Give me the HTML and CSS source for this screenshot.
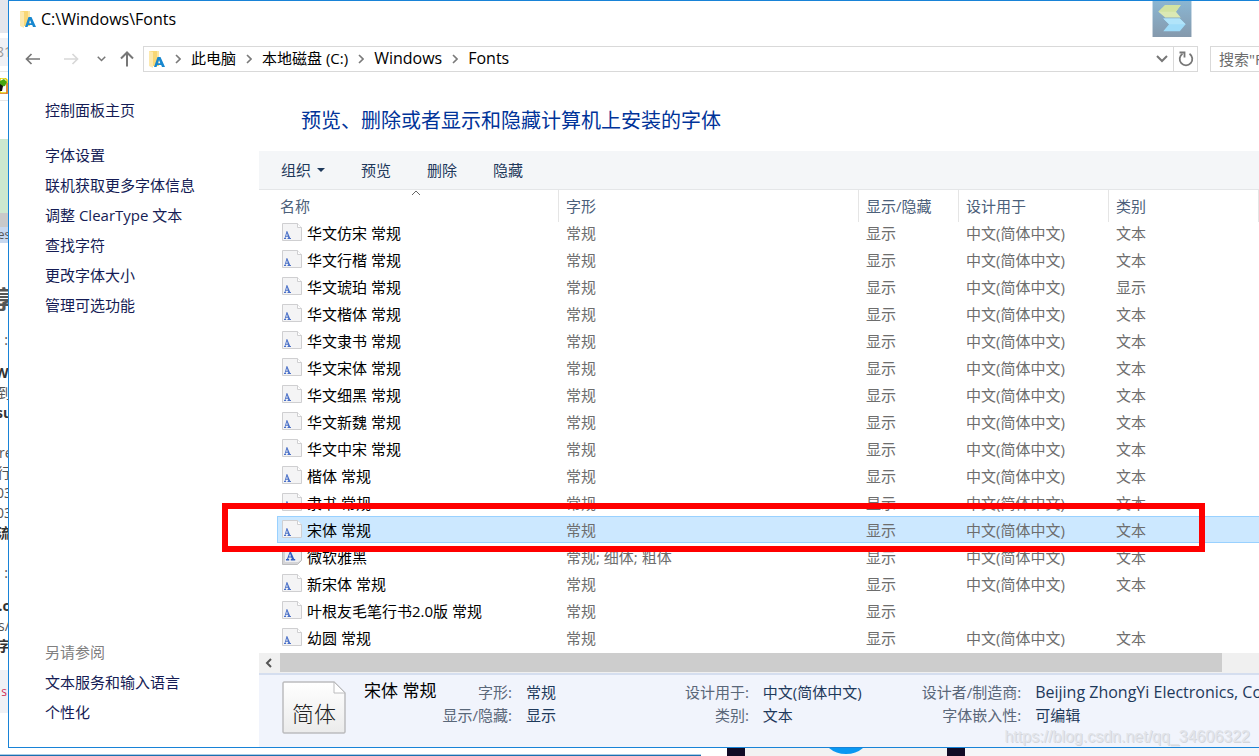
FILE: index.html
```html
<!DOCTYPE html>
<html lang="zh-CN">
<head>
<meta charset="utf-8">
<title>C:\Windows\Fonts</title>
<link rel="stylesheet" href="styles.css">
</head>
<body>
<svg class="defs" aria-hidden="true">
  <symbol id="folder" viewBox="0 0 16 18">
    <path d="M0 1h8l2 2v13H3z" fill="#f8d775"/>
    <path d="M8 1h2v13H8z" fill="#fbe6a5"/>
    <path d="M0 1l4 1v16l-4-2z" fill="#fde9ae"/>
    <path d="M8.500 7h3L16 17h-3l-.8-2H8.300l-.8 2H5zM10 10l-1 3.300h2.300z" fill="#1787cf" fill-rule="evenodd"/>
  </symbol>
  <symbol id="chev" viewBox="0 0 6 10"><path d="M1 1l4 4-4 4" fill="none" stroke="#7a7a7a" stroke-width="1.600"/></symbol>
  <symbol id="down" viewBox="0 0 12 8"><path d="M1 1l5 5 5-5" fill="none" stroke="#777" stroke-width="2"/></symbol>
  <symbol id="font" viewBox="0 0 20 18">
    <path d="M.5.5h15l4 4v13H.5z" fill="#f4f4f5" stroke="#cfcfd1"/>
    <path d="M15.500.5v4h4" fill="#fff" stroke="#cfcfd1"/>
    <path d="M5.200 8l3 7H9v1H5.500v-1h.8l-.4-1.200H3.800L3.400 15h.7v1H2v-1h.6L4.600 8zM5 10.200L4.100 12.800h1.600z" fill="#4a70c8" fill-rule="evenodd"/>
  </symbol>
  <symbol id="family" viewBox="0 0 20 18">
    <path d="M.5.500h19v13l-4 4H.5z" fill="#d4d4d7" stroke="#bdbdbf"/>
    <path d="M3 1h16v12l-3 2H3z" fill="#f0f0f1"/>
    <path d="M8.600 4l3.600 8h1v1.500H8.800V12h1l-.5-1.400H6.600L6.200 12h1v1.500H4V12h1l3-8zM8 6.500L7 9.500h2z" fill="#2f5cc0" fill-rule="evenodd"/>
  </symbol>
</svg>
<div class="screen">
  <aside class="behind" aria-hidden="true">
    <div class="b-tab"></div>
    <div class="b-url">81</div>
    <div class="b-mark"><svg viewBox="0 0 8 16"><path d="M0 0h5l2 2v13H0z" fill="#fff" stroke="#e0d200" stroke-width="1.500"/><path d="M7 5v11H0" fill="none" stroke="#e34b3b"/><path d="M0 3l4-2 3 3-2 4-5 1z" fill="#45a512"/><path d="M0 6l3 2-1 5H0z" fill="#111"/></svg></div>
    <div class="b-green"></div>
    <div class="b-grey"></div>
    <div class="b-blue">es</div>
    <div class="b-big">享</div>
    <div class="b-line b-end">:</div>
    <div class="b-group">
      <div class="b-line b-bold">Wi</div>
      <div class="b-line">到</div>
      <div class="b-line b-bold">su</div>
    </div>
    <div class="b-group">
      <div class="b-line">jre</div>
      <div class="b-line">行</div>
      <div class="b-line">03</div>
      <div class="b-line">03</div>
      <div class="b-line b-bold">流</div>
    </div>
    <div class="b-line b-end">:</div>
    <div class="b-group b-last">
      <div class="b-line b-bold">.c</div>
      <div class="b-line">s/</div>
      <div class="b-line b-bold">字</div>
    </div>
    <div class="b-code">s</div>
  </aside>

  <main class="window">
    <header class="titlebar">
      <svg class="i-folder"><use href="#folder"/></svg>
      <span>C:\Windows\Fonts</span>
    </header>
    <svg class="app-logo" viewBox="0 0 40 37">
      <defs><linearGradient id="lg" x2="0" y2="1"><stop stop-color="#8ab6d3"/><stop offset="1" stop-color="#8599ac"/></linearGradient></defs>
      <path d="M0 0h40v37H0z" fill="url(#lg)"/>
      <path d="M13 4h16l-5 7 5 6H13l-7-6z" fill="#dbe9b4"/>
      <path d="M13 4h16l-5 7H6z" fill="#d2e3a2"/>
      <path d="M11 18h17l6 6-6 7H11l6-7z" fill="#9fdcf9"/>
      <path d="M11 18h17l6 6H17z" fill="#b1e4fa"/>
    </svg>

    <nav class="navbar">
      <button class="nav-btn" aria-label="后退"><svg width="16" height="12" viewBox="0 0 16 12"><path d="M15 6H1.500M6.500 1l-5 5 5 5" fill="none" stroke="#777" stroke-width="1.700"/></svg></button>
      <button class="nav-btn nav-fwd" aria-label="前进"><svg width="16" height="12" viewBox="0 0 16 12"><path d="M1 6h13.500M9.500 1l5 5-5 5" fill="none" stroke="#d8d8d8" stroke-width="1.700"/></svg></button>
      <button class="nav-btn nav-recent" aria-label="最近"><svg width="9" height="6" viewBox="0 0 12 8"><use href="#down"/></svg></button>
      <button class="nav-btn nav-up" aria-label="向上"><svg width="14" height="16" viewBox="0 0 14 16"><path d="M7 15.500V1.500M1 7.500l6-6 6 6" fill="none" stroke="#777" stroke-width="2"/></svg></button>
      <div class="address">
        <svg class="i-folder"><use href="#folder"/></svg>
        <svg class="i-chev"><use href="#chev"/></svg><a href="#">此电脑</a>
        <svg class="i-chev"><use href="#chev"/></svg><a href="#">本地磁盘 (C:)</a>
        <svg class="i-chev"><use href="#chev"/></svg><a class="latin" href="#">Windows</a>
        <svg class="i-chev"><use href="#chev"/></svg><a class="latin" href="#">Fonts</a>
        <button class="drop" aria-label="展开"><svg width="12" height="8"><use href="#down"/></svg></button>
        <button class="refresh" aria-label="刷新"><svg width="16" height="16" viewBox="0 0 16 16"><path d="M11.500 2.800A6.300 6.300 0 1 1 4.500 2.800" fill="none" stroke="#777" stroke-width="1.800"/><path d="M1.500 1.500h5v5" fill="none" stroke="#777" stroke-width="1.800"/></svg></button>
      </div>
      <input class="search" type="text" aria-label="搜索" placeholder='搜索"Fonts"'>
    </nav>

    <div class="body">
      <aside class="sidebar">
        <a class="home" href="#">控制面板主页</a>
        <a href="#">字体设置</a>
        <a href="#">联机获取更多字体信息</a>
        <a href="#">调整 ClearType 文本</a>
        <a href="#">查找字符</a>
        <a href="#">更改字体大小</a>
        <a href="#">管理可选功能</a>
        <span class="see-also">另请参阅</span>
        <a href="#">文本服务和输入语言</a>
        <a href="#">个性化</a>
      </aside>

      <section class="content">
        <h1>预览、删除或者显示和隐藏计算机上安装的字体</h1>
        <div class="toolbar">
          <button>组织<svg width="8" height="4" viewBox="0 0 8 4"><path d="M0 0h8L4 4z" fill="#1e395b"/></svg></button>
          <button>预览</button>
          <button>删除</button>
          <button>隐藏</button>
        </div>
        <div class="list">
          <table>
            <colgroup><col class="c-name"><col class="c-style"><col class="c-show"><col class="c-for"><col class="c-kind"><col></colgroup>
            <thead><tr><th>名称<svg class="sort" viewBox="0 0 10 6"><path d="M1 5l4-4 4 4" fill="none" stroke="#666"/></svg></th><th>字形</th><th>显示/隐藏</th><th>设计用于</th><th>类别</th><th></th></tr></thead>
            <tbody>
              <tr><td><svg class="i-font"><use href="#font"/></svg>华文仿宋 常规</td><td>常规</td><td>显示</td><td>中文(简体中文)</td><td>文本</td><td></td></tr>
              <tr><td><svg class="i-font"><use href="#font"/></svg>华文行楷 常规</td><td>常规</td><td>显示</td><td>中文(简体中文)</td><td>文本</td><td></td></tr>
              <tr><td><svg class="i-font"><use href="#font"/></svg>华文琥珀 常规</td><td>常规</td><td>显示</td><td>中文(简体中文)</td><td>显示</td><td></td></tr>
              <tr><td><svg class="i-font"><use href="#font"/></svg>华文楷体 常规</td><td>常规</td><td>显示</td><td>中文(简体中文)</td><td>文本</td><td></td></tr>
              <tr><td><svg class="i-font"><use href="#font"/></svg>华文隶书 常规</td><td>常规</td><td>显示</td><td>中文(简体中文)</td><td>文本</td><td></td></tr>
              <tr><td><svg class="i-font"><use href="#font"/></svg>华文宋体 常规</td><td>常规</td><td>显示</td><td>中文(简体中文)</td><td>文本</td><td></td></tr>
              <tr><td><svg class="i-font"><use href="#font"/></svg>华文细黑 常规</td><td>常规</td><td>显示</td><td>中文(简体中文)</td><td>文本</td><td></td></tr>
              <tr><td><svg class="i-font"><use href="#font"/></svg>华文新魏 常规</td><td>常规</td><td>显示</td><td>中文(简体中文)</td><td>文本</td><td></td></tr>
              <tr><td><svg class="i-font"><use href="#font"/></svg>华文中宋 常规</td><td>常规</td><td>显示</td><td>中文(简体中文)</td><td>文本</td><td></td></tr>
              <tr><td><svg class="i-font"><use href="#font"/></svg>楷体 常规</td><td>常规</td><td>显示</td><td>中文(简体中文)</td><td>文本</td><td></td></tr>
              <tr><td><svg class="i-font"><use href="#font"/></svg>隶书 常规</td><td>常规</td><td>显示</td><td>中文(简体中文)</td><td>文本</td><td></td></tr>
              <tr class="selected"><td><svg class="i-font"><use href="#font"/></svg>宋体 常规<span class="marker"></span></td><td>常规</td><td>显示</td><td>中文(简体中文)</td><td>文本</td><td></td></tr>
              <tr><td><svg class="i-font"><use href="#family"/></svg>微软雅黑</td><td>常规; 细体; 粗体</td><td>显示</td><td>中文(简体中文)</td><td>文本</td><td></td></tr>
              <tr><td><svg class="i-font"><use href="#font"/></svg>新宋体 常规</td><td>常规</td><td>显示</td><td>中文(简体中文)</td><td>文本</td><td></td></tr>
              <tr><td><svg class="i-font"><use href="#font"/></svg>叶根友毛笔行书2.0版 常规</td><td>常规</td><td>显示</td><td></td><td></td><td></td></tr>
              <tr><td><svg class="i-font"><use href="#font"/></svg>幼圆 常规</td><td>常规</td><td>显示</td><td>中文(简体中文)</td><td>文本</td><td></td></tr>
            </tbody>
          </table>
        </div>
        <div class="scrollbar">
          <button aria-label="向左滚动"><svg width="7" height="10" viewBox="0 0 7 10"><path d="M6 1L2 5l4 4" fill="none" stroke="#555" stroke-width="2"/></svg></button>
          <div class="thumb"></div>
        </div>
        <footer class="details">
          <div class="preview">
            <svg viewBox="0 0 64 53"><defs><linearGradient id="pg" x2="0" y2="1"><stop stop-color="#fff"/><stop offset="1" stop-color="#ebebeb"/></linearGradient></defs><path d="M2 1h50l11 11v39l-1 1H2l-1-1V2z" fill="url(#pg)" stroke="#bcbcbe" stroke-width="1.500"/><path d="M52 1v11h11z" fill="#fff" stroke="#bcbcbe"/></svg>
            <span>简体</span>
          </div>
          <h2>宋体 常规</h2>
          <dl class="d1"><dt>字形:</dt><dd>常规</dd><dt>显示/隐藏:</dt><dd>显示</dd></dl>
          <dl class="d2"><dt>设计用于:</dt><dd>中文(简体中文)</dd><dt>类别:</dt><dd>文本</dd></dl>
          <dl class="d3"><dt>设计者/制造商:</dt><dd class="latin">Beijing ZhongYi Electronics, Co</dd><dt>字体嵌入性:</dt><dd>可编辑</dd></dl>
        </footer>
      </section>
    </div>
    <div class="watermark">https://blog.csdn.net/qq_34606322</div>
  </main>

  <div class="under" aria-hidden="true">
    <div class="u-bar"></div><div class="u-gap"></div><div class="u-dark"></div>
    <div class="u-mid"><svg width="40" height="7" viewBox="0 0 40 7"><path d="M3 0h34q-7 6-17 6T3 0z" fill="#0a98f2"/></svg></div>
    <div class="u-dark"></div><div class="u-rest"></div>
  </div>
</div>
</body>
</html>
```

FILE: styles.css
```css
* { box-sizing: border-box; }
body {
  margin: 0;
  background: #fff;
  font: 15px/20px "Open Sans", "Noto Sans CJK SC", sans-serif;
  color: #000;
}
a { color: inherit; text-decoration: none; }
button { font: inherit; color: inherit; border: 0; padding: 0; background: none; }
svg { display: block; flex: none; }
.defs { position: absolute; width: 0; height: 0; }
.latin { font-size: 16px; }

.screen {
  display: grid;
  grid-template: minmax(0, 1fr) 8px / 8px minmax(0, 1fr);
  height: 100vh;
  overflow: hidden;
}

/* page that shows at the left of the window */
.behind { overflow: hidden; min-height: 0; font-size: 14px; color: #555; }
.behind > div, .b-line { display: flex; justify-content: center; white-space: nowrap; }
.b-tab { height: 33px; background: #e4e6ec; }
.b-url { height: 28px; margin: 5px 0; background: #f0f1f5; align-items: center; color: #999; }
.b-mark { height: 30px; align-items: center; border: solid #e6e6e6; border-width: 1px 0; }
.b-mark svg { width: 8px; height: 16px; }
.b-green { height: 74px; margin-top: 38px; background: #cce8cf; }
.b-grey { height: 14px; background: #c9c9c9; }
.b-blue { height: 16px; background: #c7d8ef; font-size: 12px; line-height: 16px; }
.b-big { margin-top: 43px; height: 26px; font-size: 24px; line-height: 26px; font-weight: 700; }
.behind > .b-end { margin-top: 18px; justify-content: flex-end; }
.behind > .b-group { display: block; margin: 13px 0 20px; }
.behind > .b-group + .b-group { margin-top: 0; }
.behind > .b-last { margin-bottom: 14px; }
.b-line { height: 20px; }
.b-bold { font-weight: 700; color: #333; }
.b-code { height: 43px; align-items: center; background: #f0f1f5; color: #d0305a; font-size: 12px; }

/* strip under the window */
.under { grid-column: 1 / 3; display: flex; background: #fff; }
.u-bar { flex: 701; margin-top: 6px; background: #1a6fb0; border-top: 1px solid #a9cbe6; }
.u-gap { flex: 26; }
.u-dark { flex: 18; background: #110c26; }
.u-mid { flex: 202; display: flex; justify-content: center; background: #f2f2f2; }
.u-rest { flex: 294; background: #f5f6f8; }

.window {
  position: relative;
  display: flex;
  flex-direction: column;
  min-height: 0;
  overflow: hidden;
  background: #fff;
  border: solid #1883d7;
  border-width: 1px 0 1px 1px;
}
.titlebar { display: flex; align-items: center; gap: 5px; height: 37px; padding: 0 0 2px 11px; font-size: 16px; }
.i-folder { width: 16px; height: 18px; }
.app-logo { position: absolute; top: 0; right: 67px; width: 40px; height: 36px; }

.navbar { display: flex; height: 42px; padding: 8px 0 8px 15px; }
.nav-btn { display: flex; align-items: center; justify-content: center; width: 18px; }
.nav-fwd { margin-left: 20px; }
.nav-recent { margin-left: 12px; }
.nav-up { margin-left: 8px; }
.address { flex: 1; display: flex; align-items: center; margin-left: 7px; border: 1px solid #d9d9d9; padding-left: 5px; white-space: nowrap; }
.address a { padding-bottom: 2px; }
.i-chev { width: 6px; height: 10px; margin: 0 10px; }
.drop { width: 22px; margin-left: auto; display: flex; align-items: center; justify-content: center; }
.refresh { width: 24px; align-self: stretch; border-left: 1px solid #d9d9d9; display: flex; align-items: center; justify-content: center; }
.search { width: 49px; margin-left: 12px; border: 1px solid #d9d9d9; border-right: 0; padding: 0 0 0 8px; font: inherit; }
.search::placeholder { color: #6d6d6d; opacity: 1; }

.body { flex: 1; display: flex; min-height: 0; }
.sidebar { flex: none; width: 250px; padding: 15px 0 20px 36px; display: flex; flex-direction: column; line-height: 30px; color: #151c55; }
.sidebar .home { margin-bottom: 15px; }
.see-also { margin-top: auto; color: #808080; }

.content { flex: 1; min-width: 0; display: flex; flex-direction: column; }
h1 { margin: 0; padding: 26px 42px 15px; font-size: 20px; line-height: 30px; font-weight: 400; color: #003399; }
.toolbar { display: flex; gap: 36px; height: 39px; padding-left: 22px; background: #f4f6f8; border-bottom: 1px solid #e4e6e8; color: #1e395b; }
.toolbar button { display: flex; align-items: center; gap: 6px; }

.list { flex: 1; min-height: 0; padding-left: 18px; }
table { width: 100%; table-layout: fixed; border-collapse: collapse; white-space: nowrap; }
.c-name { width: 281px; }
.c-style { width: 300px; }
.c-show { width: 100px; }
.c-for, .c-kind { width: 150px; }
th, td { padding: 0 0 0 8px; text-align: left; font-weight: 400; }
th { position: relative; height: 29px; padding-top: 3px; color: #4c607a; }
th:first-child { padding-left: 3px; }
th + th::before { content: ""; position: absolute; left: 0; top: 0; width: 1px; height: 32px; background: #e5e5e5; }
.sort { position: absolute; left: 134px; top: 0; width: 10px; height: 6px; }
td { height: 27px; color: #6d6d6d; }
td:first-child { display: flex; align-items: center; gap: 5px; padding-left: 5px; color: #000; }
.i-font { width: 20px; height: 18px; margin-bottom: 2px; }
.selected { position: relative; }
.selected td { background: #cce8ff; box-shadow: inset 0 1px #99d1ff, inset 0 -1px #99d1ff; }
.selected td:first-child { box-shadow: inset 0 1px #99d1ff, inset 0 -1px #99d1ff, inset 1px 0 #99d1ff; }
.marker { position: absolute; left: -55px; right: 54px; top: -13px; bottom: -9px; border: 6px solid #f00; }

.scrollbar { display: flex; height: 20px; background: #f0f0f0; }
.scrollbar button { width: 19px; margin-right: 2px; display: flex; align-items: center; justify-content: center; }
.thumb { flex: 1; margin: 0 37px 1px 0; background: #cdcdcd; }

.details { display: flex; height: 74px; padding: 6px 0 0 23px; background: #f1f4fc; border-top: 2px solid #d5deef; white-space: nowrap; overflow: hidden; line-height: 23px; }
.preview { position: relative; width: 64px; height: 53px; }
.preview svg { width: 64px; height: 53px; }
.preview span { position: absolute; left: 0; right: 0; top: 20px; text-align: center; font: 22px/23px "Noto Sans CJK SC", sans-serif; font-weight: 300; color: #222; }
h2 { margin: 0 0 0 18px; font-size: 17px; line-height: 20px; font-weight: 400; }
dl { display: grid; grid-template-columns: auto auto; column-gap: 14px; align-content: start; margin: 0; }
dt { text-align: right; color: #5a6779; }
dd { margin: 0; color: #1e395b; }
.d1 { margin-left: 6px; }
.d2 { margin-left: 129px; }
.d3 { margin-left: 60px; }

.watermark { position: absolute; right: 9px; bottom: 0; font: 16px/20px "Liberation Sans", sans-serif; color: #e2e4e9; text-shadow: 1px 1px #d3d6dc; }
```
